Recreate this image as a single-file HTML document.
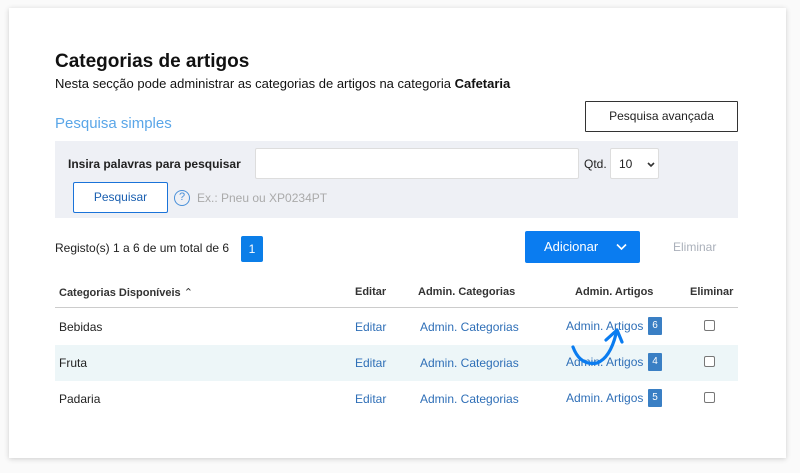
<!DOCTYPE html>
<html><head><meta charset="utf-8"><style>
*{margin:0;padding:0;box-sizing:border-box}
body{width:800px;height:473px;background:#fafafa;font-family:"Liberation Sans",sans-serif;position:relative;overflow:hidden;color:#222}
.card{position:absolute;left:9px;top:8px;width:777px;height:450px;background:#fff;box-shadow:0 1px 5px rgba(0,0,0,.18)}
.a{position:absolute;white-space:nowrap}
.lnk{color:#2f6fb7;font-size:12px}
.badge{position:absolute;width:14px;height:18px;background:#3a7fc4;color:#fff;font-size:10px;text-align:center;line-height:18px;border-radius:1px}
.cb{position:absolute;width:11px;height:11px;border:1px solid #777;border-radius:2px;background:#fff}
</style></head><body>
<div class="card"></div>
<div class="a" style="left:55px;top:51px;font-size:19px;font-weight:bold;color:#111">Categorias de artigos</div>
<div class="a" style="left:55px;top:76px;font-size:13px;color:#111">Nesta secção pode administrar as categorias de artigos na categoria <b>Cafetaria</b></div>
<div class="a" style="left:55px;top:115px;font-size:15px;color:#5aa6e8">Pesquisa simples</div>
<div class="a" style="left:585px;top:101px;width:153px;height:31px;border:1px solid #333;font-size:12px;text-align:center;line-height:29px;border-radius:1px">Pesquisa avançada</div>
<div class="a" style="left:55px;top:141px;width:683px;height:77px;background:#eef0f5"></div>
<div class="a" style="left:68px;top:157px;font-size:12px;font-weight:bold">Insira palavras para pesquisar</div>
<div class="a" style="left:255px;top:148px;width:324px;height:31px;background:#fff;border:1px solid #ddd;border-radius:2px"></div>
<div class="a" style="left:584px;top:157px;font-size:12px">Qtd.</div>
<div class="a" style="left:610px;top:148px;width:49px;height:31px;background:#fff;border:1px solid #ddd;border-radius:2px;font-size:12px;padding:8px 0 0 8px">10<svg style="position:absolute;left:36px;top:13px" width="8" height="6"><path d="M1 1L4 4L7 1" stroke="#333" stroke-width="1.6" fill="none"/></svg></div>
<div class="a" style="left:73px;top:182px;width:95px;height:31px;background:#fff;border:1px solid #1a73d9;font-size:12px;text-align:center;line-height:29px;color:#1a5fb0;border-radius:2px">Pesquisar</div>
<div class="a" style="left:174px;top:190px;width:16px;height:16px;border:1.5px solid #4a90d9;border-radius:50%;color:#4a90d9;font-size:11px;text-align:center;line-height:13px">?</div>
<div class="a" style="left:197px;top:191px;font-size:12px;color:#aaa">Ex.: Pneu ou XP0234PT</div>
<div class="a" style="left:55px;top:241px;font-size:12px">Registo(s) 1 a 6 de um total de 6</div>
<div class="a" style="left:241px;top:236px;width:22px;height:26px;background:#0b7ee8;color:#fff;font-size:12px;text-align:center;line-height:26px;border-radius:2px">1</div>
<div class="a" style="left:525px;top:231px;width:115px;height:32px;background:#0a7cf0;color:#fff;font-size:13px;line-height:32px;padding-left:19px;border-radius:2px">Adicionar<svg style="position:absolute;left:91px;top:12px" width="11" height="8"><path d="M1 1.5L5.5 6L10 1.5" stroke="#fff" stroke-width="1.6" fill="none"/></svg></div>
<div class="a" style="left:673px;top:240px;font-size:12px;color:#aab0ba">Eliminar</div>
<div class="a" style="left:59px;top:286px;font-size:11px;font-weight:bold;color:#333">Categorias Disponíveis <span style="font-weight:normal">&#8963;</span></div>
<div class="a" style="left:355px;top:286px;font-size:11px;font-weight:bold;color:#333">Editar</div>
<div class="a" style="left:418px;top:286px;font-size:11px;font-weight:bold;color:#333">Admin. Categorias</div>
<div class="a" style="left:575px;top:286px;font-size:11px;font-weight:bold;color:#333">Admin. Artigos</div>
<div class="a" style="left:690px;top:286px;font-size:11px;font-weight:bold;color:#333">Eliminar</div>
<div class="a" style="left:55px;top:307px;width:683px;height:1px;background:#ccc"></div>
<div class="a" style="left:55px;top:345px;width:683px;height:36px;background:#edf6f8"></div>
<div class="a" style="left:59px;top:320px;font-size:12px">Bebidas</div>
<div class="a" style="left:59px;top:356px;font-size:12px">Fruta</div>
<div class="a" style="left:59px;top:392px;font-size:12px">Padaria</div>
<div class="a lnk" style="left:355px;top:320px">Editar</div>
<div class="a lnk" style="left:355px;top:356px">Editar</div>
<div class="a lnk" style="left:355px;top:392px">Editar</div>
<div class="a lnk" style="left:420px;top:320px">Admin. Categorias</div>
<div class="a lnk" style="left:420px;top:356px">Admin. Categorias</div>
<div class="a lnk" style="left:420px;top:392px">Admin. Categorias</div>
<div class="a lnk" style="left:566px;top:319px">Admin. Artigos</div>
<div class="a lnk" style="left:566px;top:355px">Admin. Artigos</div>
<div class="a lnk" style="left:566px;top:391px">Admin. Artigos</div>
<div class="badge" style="left:648px;top:317px">6</div>
<div class="badge" style="left:648px;top:353px">4</div>
<div class="badge" style="left:648px;top:389px">5</div>
<div class="cb" style="left:704px;top:320px"></div>
<div class="cb" style="left:704px;top:356px"></div>
<div class="cb" style="left:704px;top:392px"></div>
<svg class="a" style="left:0;top:0" width="800" height="473"><path d="M573 347Q580 366 597 363Q610 358 616 334" stroke="#0a7cf0" stroke-width="3.2" fill="none" stroke-linecap="round"/><path d="M606 340L617 330L622 342" stroke="#0a7cf0" stroke-width="3.2" fill="none" stroke-linecap="round" stroke-linejoin="round"/></svg>
</body></html>
